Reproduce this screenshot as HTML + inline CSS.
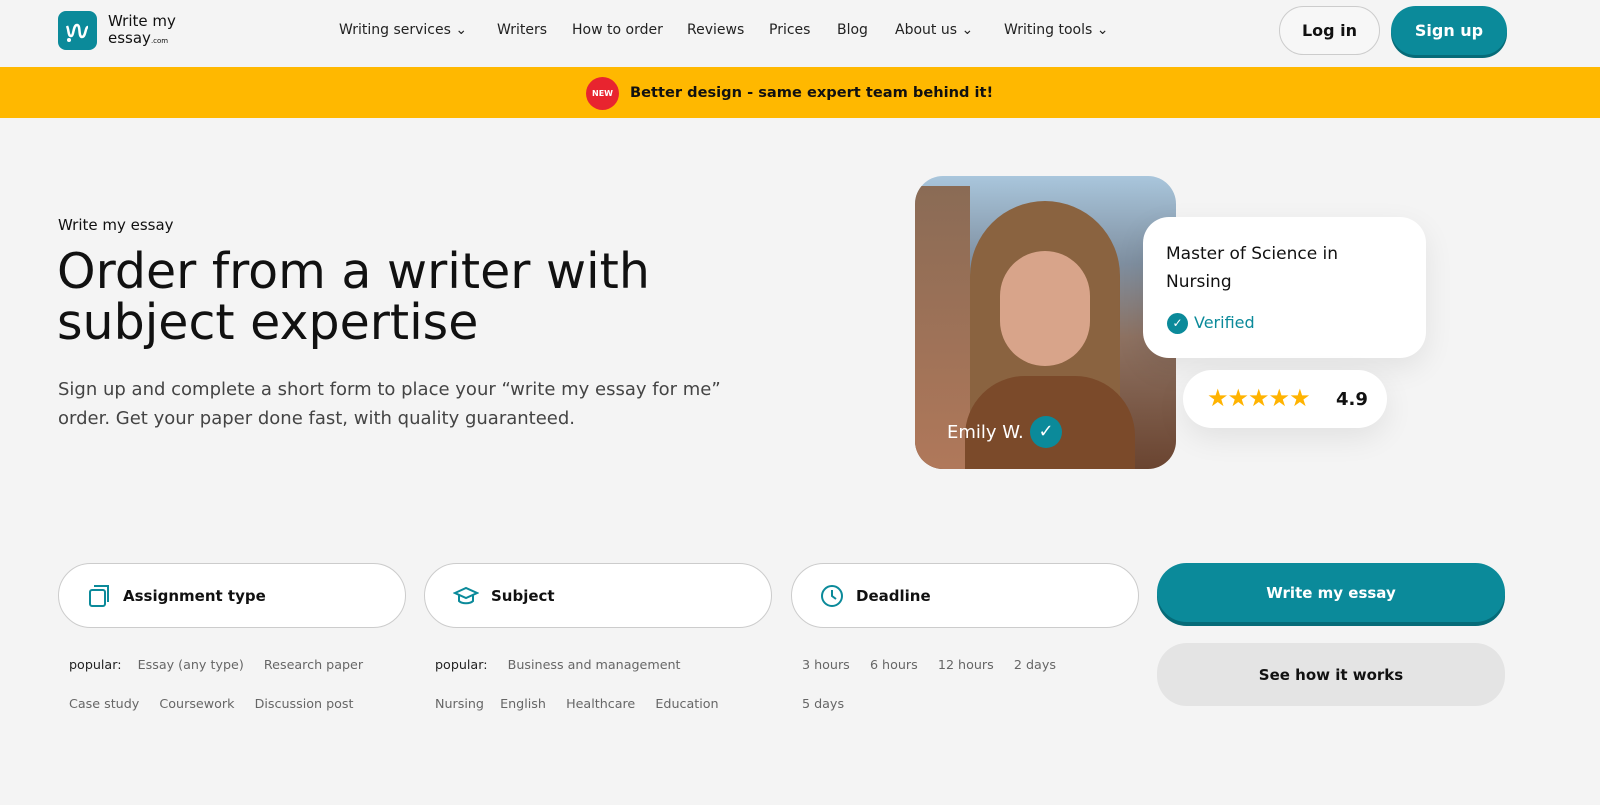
<!DOCTYPE html><html><head><meta charset="utf-8"><style>
*{box-sizing:border-box;margin:0;padding:0}
body{width:1600px;height:805px;overflow:hidden;background:#f4f4f4;font-family:"DejaVu Sans",sans-serif;color:#111;position:relative}
.a{position:absolute}
.nav a{position:absolute;top:22px;font-size:14px;color:#222}
.btn{position:absolute;border-radius:30px;display:flex;align-items:center;justify-content:center;font-weight:bold;font-size:16px}
.field{position:absolute;top:563px;width:348px;height:65px;border:1px solid #ccc;border-radius:33px;background:#fff;display:flex;align-items:center;padding-left:28px;font-weight:bold;font-size:15px;gap:12px}
.t{position:absolute;font-size:12.7px;color:#666}
.t b{font-weight:normal;color:#222}
</style></head><body>
<div class="a" style="left:58px;top:11px;width:39px;height:39px;border-radius:8px;background:#0b8a9a"><svg width="39" height="39"><path d="M9 15c2 4 1 10 4 10s2-11 6-11 1 12 5 12 3-10 6-10" stroke="#fff" stroke-width="2.5" fill="none"/><circle cx="11" cy="29" r="2" fill="#fff"/></svg></div>
<div class="a" style="left:108px;top:13px;font-size:15px;line-height:17px">Write my<br>essay<span style="font-size:7px">.com</span></div>
<div class="nav"><a style="left:339px">Writing services ⌄</a><a style="left:497px">Writers</a><a style="left:572px">How to order</a><a style="left:687px">Reviews</a><a style="left:769px">Prices</a><a style="left:837px">Blog</a><a style="left:895px">About us ⌄</a><a style="left:1004px">Writing tools ⌄</a></div>
<div class="btn" style="left:1279px;top:6px;width:101px;height:49px;border:1px solid #ccc;background:#f7f7f7">Log in</div>
<div class="btn" style="left:1391px;top:6px;width:116px;height:49px;background:#0b8a9a;color:#fff;box-shadow:0 3px 0 #066b78">Sign up</div>
<div class="a" style="left:0;top:67px;width:1600px;height:51px;background:#ffb800"></div>
<div class="a" style="left:586px;top:77px;width:33px;height:33px;border-radius:50%;background:#e8242f;color:#fff;font-size:8px;font-weight:bold;display:flex;align-items:center;justify-content:center">NEW</div>
<div class="a" style="left:630px;top:84px;font-size:14.6px;font-weight:bold">Better design - same expert team behind it!</div>
<div class="a" style="left:58px;top:216px;font-size:15px">Write my essay</div>
<div class="a" style="left:57px;top:246px;font-size:49px;line-height:51px">Order from a writer with<br>subject expertise</div>
<div class="a" style="left:58px;top:375px;font-size:18px;line-height:29px;color:#444">Sign up and complete a short form to place your “write my essay for me”<br>order. Get your paper done fast, with quality guaranteed.</div>
<div class="a" style="left:915px;top:176px;width:261px;height:293px;border-radius:28px;overflow:hidden;background:linear-gradient(180deg,#a9c6dc 0%,#7f8fa0 30%,#8e7262 55%,#6a4430 100%)">
<div class="a" style="left:0;top:10px;width:55px;height:283px;background:linear-gradient(#8a6b55,#b0785a)"></div>
<div class="a" style="left:55px;top:25px;width:150px;height:268px;border-radius:75px 75px 0 0;background:#8a6340"></div>
<div class="a" style="left:85px;top:75px;width:90px;height:115px;border-radius:45px;background:#d8a48a"></div>
<div class="a" style="left:50px;top:200px;width:170px;height:93px;border-radius:60px 60px 0 0;background:#7b4a2a"></div>
<div class="a" style="left:32px;top:246px;color:#fff;font-size:18px">Emily W.</div>
<div class="a" style="left:115px;top:240px;width:32px;height:32px;border-radius:50%;background:#0b8a9a;color:#fff;text-align:center;line-height:32px;font-size:18px">✓</div></div>
<div class="a" style="left:1143px;top:217px;width:283px;height:141px;background:#fff;border-radius:26px;box-shadow:0 10px 30px rgba(0,0,0,.08)"></div>
<div class="a" style="left:1166px;top:240px;font-size:17px;line-height:28px">Master of Science in<br>Nursing</div>
<div class="a" style="left:1167px;top:313px;width:21px;height:21px;border-radius:50%;background:#0b8a9a;color:#fff;font-size:12px;text-align:center;line-height:21px">✓</div>
<div class="a" style="left:1194px;top:313px;font-size:16px;color:#0b8a9a">Verified</div>
<div class="a" style="left:1183px;top:370px;width:204px;height:58px;background:#fff;border-radius:29px;box-shadow:0 10px 30px rgba(0,0,0,.08)"></div>
<div class="a" style="left:1207px;top:384px;font-size:24px;color:#ffb300;letter-spacing:-1px">★★★★★</div>
<div class="a" style="left:1336px;top:389px;font-size:18px;font-weight:bold">4.9</div>
<div class="field" style="left:58px"><svg width="24" height="24" fill="none" stroke="#0b8a9a" stroke-width="2"><rect x="3" y="6" width="15" height="16" rx="2"/><path d="M7 2h14v16"/></svg>Assignment type</div>
<div class="field" style="left:424px"><svg width="26" height="24" fill="none" stroke="#0b8a9a" stroke-width="2"><path d="M2 9l11-5 11 5-11 5z M6 11v6c3 3 11 3 14 0v-6"/></svg>Subject</div>
<div class="field" style="left:791px"><svg width="24" height="24" fill="none" stroke="#0b8a9a" stroke-width="2"><circle cx="12" cy="12" r="10"/><path d="M12 6v6l4 3"/></svg>Deadline</div>
<div class="btn" style="left:1157px;top:563px;width:348px;height:59px;background:#0b8a9a;color:#fff;font-size:15px;box-shadow:0 4px 0 #066b78">Write my essay</div>
<div class="btn" style="left:1157px;top:643px;width:348px;height:63px;background:#e4e4e4;font-size:15px">See how it works</div>
<div class="t" style="left:69px;top:657px"><b>popular:</b>&nbsp;&nbsp;&nbsp;&nbsp;Essay (any type)&nbsp;&nbsp;&nbsp;&nbsp;&nbsp;Research paper</div>
<div class="t" style="left:69px;top:696px">Case study&nbsp;&nbsp;&nbsp;&nbsp;&nbsp;Coursework&nbsp;&nbsp;&nbsp;&nbsp;&nbsp;Discussion post</div>
<div class="t" style="left:435px;top:657px"><b>popular:</b>&nbsp;&nbsp;&nbsp;&nbsp;&nbsp;Business and management</div>
<div class="t" style="left:435px;top:696px">Nursing&nbsp;&nbsp;&nbsp;&nbsp;English&nbsp;&nbsp;&nbsp;&nbsp;&nbsp;Healthcare&nbsp;&nbsp;&nbsp;&nbsp;&nbsp;Education</div>
<div class="t" style="left:802px;top:657px">3 hours&nbsp;&nbsp;&nbsp;&nbsp;&nbsp;6 hours&nbsp;&nbsp;&nbsp;&nbsp;&nbsp;12 hours&nbsp;&nbsp;&nbsp;&nbsp;&nbsp;2 days</div>
<div class="t" style="left:802px;top:696px">5 days</div>
</body></html>
